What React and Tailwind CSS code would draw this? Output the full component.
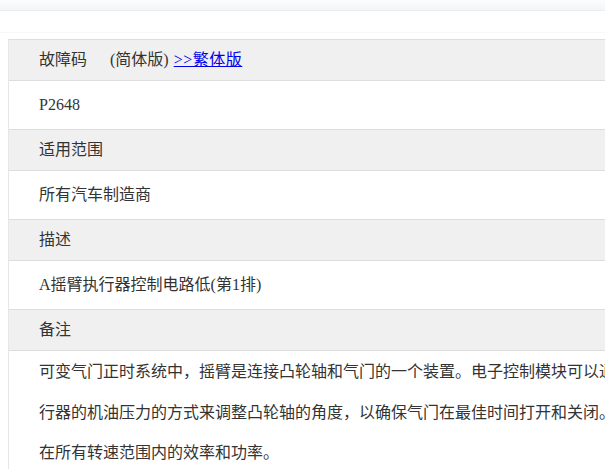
const rows = [
  { head: true, content: "header" },
  { head: false, content: "P2648" },
  { head: true, content: "适用范围" },
  { head: false, content: "所有汽车制造商" },
  { head: true, content: "描述" },
  { head: false, content: "A摇臂执行器控制电路低(第1排)" },
  { head: true, content: "备注" },
];

const noteLines = [
  "可变气门正时系统中，摇臂是连接凸轮轴和气门的一个装置。电子控制模块可以通过控制摇臂执",
  "行器的机油压力的方式来调整凸轮轴的角度，以确保气门在最佳时间打开和关闭。从而提高发动机",
  "在所有转速范围内的效率和功率。",
];

export default function App() {
  return (
    <div
      className="w-[605px] h-[469px] overflow-hidden bg-white text-[#333] text-[16px]"
      style={{ fontFamily: '"Liberation Serif", "Noto Sans CJK SC", serif' }}
    >
      {/* top strip */}
      <div className="h-[11px] bg-gradient-to-b from-[#fbfcfd] to-[#f3f5f8] border-b border-[#ebedf0]" />
      <div className="h-[22px] border-b border-[#f8f8f8]" />
      <div className="h-[6px]" />

      <div className="pl-2">
        <div className="w-[900px] border-l border-[#e6e6e6]">
          {rows.map((r, i) =>
            r.head ? (
              <div
                key={i}
                className="border-t border-[#dddddd] bg-[#f0f0f0] h-[41px] flex items-center pl-[30px]"
              >
                {r.content === "header" ? (
                  <div className="flex items-center whitespace-nowrap">
                    <span>故障码</span>
                    <span className="ml-[23px]">(简体版)</span>
                    <a href="#" className="ml-[5px] text-[#0000ee] underline tracking-[0.5px]">
                      &gt;&gt;繁体版
                    </a>
                  </div>
                ) : (
                  <span>{r.content}</span>
                )}
              </div>
            ) : (
              <div
                key={i}
                className="border-t border-[#dddddd] h-[49px] flex items-center pl-[30px]"
              >
                <span>{r.content}</span>
              </div>
            )
          )}
          <div className="border-t border-[#dddddd] pl-[30px] pt-[1px]">
            {noteLines.map((l, i) => (
              <div key={i} className="leading-[40.5px] whitespace-nowrap">
                {l}
              </div>
            ))}
          </div>
        </div>
      </div>
    </div>
  );
}
